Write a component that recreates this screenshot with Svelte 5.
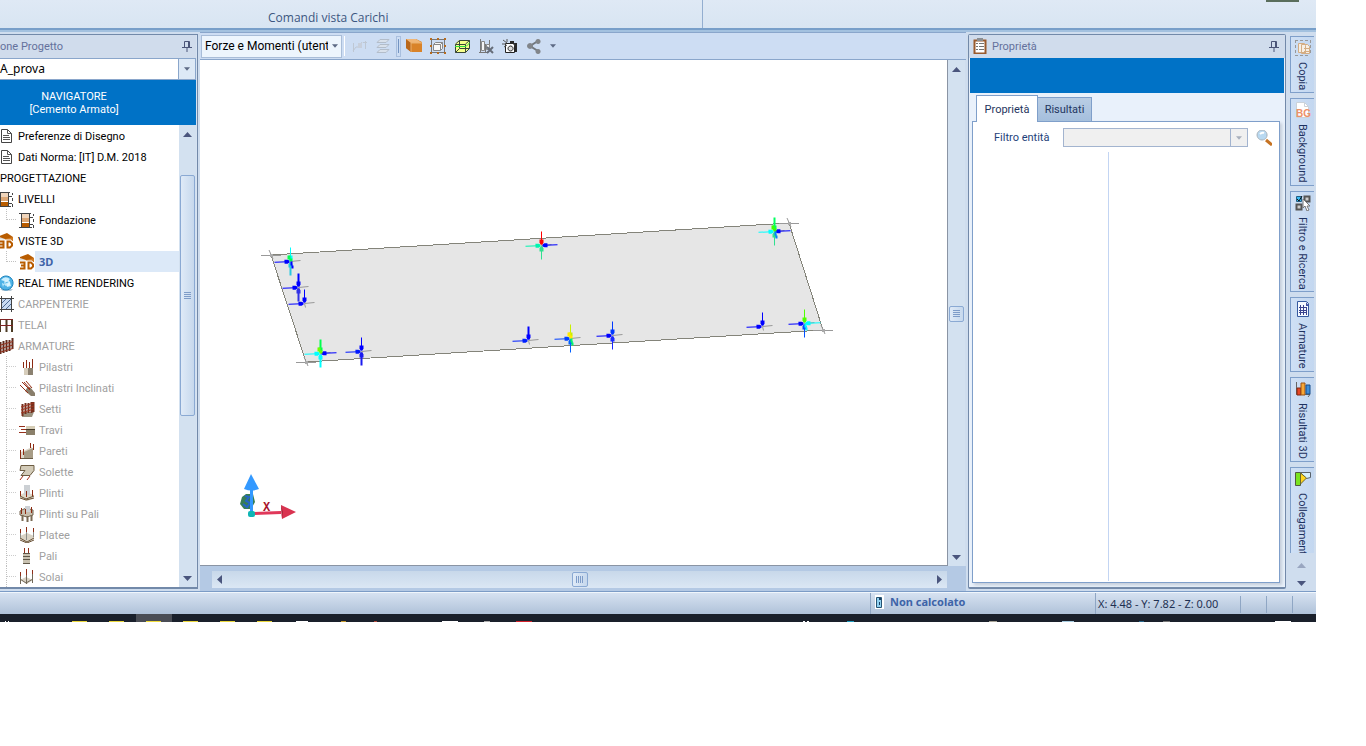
<script>
    // every icon is a list of [path, fill, stroke, stroke width] on a 16x16 grid
    const icons = {
        doc: [["M3.5 1.5h6l4 4v9h-10z", "#fff", "#444"], ["M9.5 1.5v4h4M5 7.5h6M5 9.5h7M5 11.5h7", "none", "#555"]],
        level: [
            ["M3 2h7v4H3z", "#f0d5bb"], ["M3 6h7v4H3z", "#dda877"], ["M3 11h7v4H3z", "#b85c00"],
            ["M0 1.5h12M2.500 1v14M10.500 1v14M0 15.500h13M10 5.500h4M10 12.500h4", "none", "#444"],
            ["M14.500 2v2M14.500 7v3M14.500 13v3", "none", "#444"]
        ],
        view3d: [
            ["M1 3l8-3 6 4v4H1z", "#b85c00"], ["M1 4l6 2v2H1z", "#dedad4"], ["M7 6l8-2v4H7z", "#d27a20"],
            ["M1 8.500h4.500v6H1M2 11.500h3M9.500 8.500h2.500l2 2v2l-2 2H9.500z", "none", "#fff", 4],
            ["M1 8.500h4.500v6H1M2 11.500h3M9.500 8.500h2.500l2 2v2l-2 2H9.500z", "none", "#b85c00", 2]
        ],
        globe: [
            ["M2 14h13l-2 2H5z", "#b5c9d6"], ["M8 1a7 7 0 1 0 .1 0z", "#4fb3e6", "#1c83bd"],
            ["M3 5q4-5 9-1l-3 3zM8 8l4-1 1 4-4 1zM4 8l2 1-1 3z", "#c9efff"], ["M7 6h4v4H7z", "none", "#e9fbff"]
        ],
        carp: [
            ["M3 3h10v10H3z", "#c9dbf2"], ["M3 8l5-5M3 13L13 3M8 13l5-5", "none", "#4d6a94"],
            ["M3.500 0v16M13.500 0v16M1 2.500h15M1 13.500h15", "none", "#444"]
        ],
        frame: [["M2 15V2M8.500 15V2M14 15V2", "none", "#4c3b24", 2], ["M1 2.500h14M1 8.500h14", "none", "#7e2222", 1]],
        bars: [
            ["M2.500 4v12M5.500 3v12M8.500 2v12M11.500 2v11M14.500 0v11", "none", "#5e2b1d", 2],
            ["M1 7.500l14-4M1 11l14-4M1 14.500l14-4", "none", "#92301c", 1]
        ],
        pilastri: [
            ["M5 9h9v7H5z", "#8b8170"], ["M5 9h4v7H5z", "#d6cdbb"],
            ["M4.500 3v6M7.500 1v8M10.500 3v6M13.500 0v9", "none", "#8c2a12", 1]
        ],
        inclinati: [["M8 8l3-1 5 6v3h-4L6 11z", "#897e6b"], ["M1 5l8 8M3 2l8 8M7 1l6 7M5 2l6 7", "none", "#982f16", 1]],
        setti: [
            ["M3 11h12l-2 5H3z", "#9b927f"], ["M3.500 3v12M6.500 2v11M9.500 2v10M12.500 1v11M14.500 1v10", "none", "#75301e", 2],
            ["M2 6l13-4M2 9l13-4M2 12l13-4", "none", "#9d321d"]
        ],
        travi: [
            ["M7 4h9v9H7z", "#8b806a"], ["M7 4h9v3H7z", "#d6cdb6"],
            ["M0 4.500h6M2 7.500h6M0 10.500h7", "none", "#96301b", 1], ["M7 7.500h9", "none", "#433929"]
        ],
        pareti: [
            ["M2 9l11-5v11H2z", "#ddd6c9"], ["M5 9l9-4v11H5z", "#a79c86"],
            ["M1.500 7v9M4.500 6v6M11.500 0v5M14.500 1v6", "none", "#8c2a12"], ["M2 15.500h12", "none", "#695c46"]
        ],
        solette: [
            ["M2 1.500h13v5l-4 5H2l4-5H1z", "#d3cbb8", "#6c5c42"], ["M4 12l-3 4M11 12l-3 4", "none", "#a53018", 1]
        ],
        plinti: [
            ["M1 10l6-3 8 3-1 4-6 2-7-3z", "#ded8c9"], ["M5 0h6v10H5z", "#ccd0d4"],
            ["M1 11l6 3 8-3M1 13l6 2 8-2", "none", "#6b5338"], ["M1.500 6v5M7.500 6v6M13.500 5v6", "none", "#8c2a12"]
        ],
        plintiPali: [
            ["M1 5l6-3 7 2v5l-6 2-7-2z", "#c8bfae", "#73634e"], ["M6 0h5v6H6z", "#ccd0d4"],
            ["M3.500 9v6M8.500 10v6M12.500 9v6", "none", "#7a6b54", 2], ["M2.500 2v6M6.500 3v5M12.500 1v6", "none", "#8c2a12"]
        ],
        platee: [
            ["M1 9l7-3 7 3v3l-7 4-7-4z", "#d9d3c5"], ["M1 11l7 4 7-4M1 13l7 3 7-3", "none", "#6b5338"],
            ["M1.500 2v4M7.500 0v5M14.500 1v4", "none", "#8c2a12"], ["M1.500 6v5M7.500 5v8M14.500 5v5", "none", "#8a8a86"]
        ],
        pali: [
            ["M4 5h7v11H4z", "#c8c1b0"], ["M5.500 0v6M9.500 0v6", "none", "#92301b", 1],
            ["M4 5.500h7M4 8.500h7M4 11.500h7M4 15.500h7", "none", "#5f5748"]
        ],
        solai: [
            ["M1 11l6-3 7 3-6 4z", "#d8d2c5"], ["M1 10l6 4 7-4M1.500 5v10M13.500 4v10M7.500 6v9", "none", "#716858"],
            ["M1.500 3v4M7.500 0v6M13.500 1v4", "none", "#92301b"]
        ],
        pin: [["M5.500 9V3.500h5V9M3 9.500h10M8 10v4M9.500 4v5", "none", "#4b5578"]],
        clip: [
            ["M2.500 2.500h11v13h-11z", "#fff", "#9a5b2c", 2], ["M5 0h6v3H5z", "#8b8f93"],
            ["M4 5.500h2M7 5.500h5M4 8.500h2M7 8.500h5M4 11.500h2M7 11.500h5", "none", "#747474"]
        ],
        lens: [["M10 10l6 5", "none", "#c67323", 3], ["M6 0a5 5 0 1 0 .1 0z", "#b9d9f1", "#a7b1ba"], ["M4 4q2-2 4-1", "none", "#fff", 2]],
        loadOff: [["M2.500 5v9M2 13l3-4h3l3-5M14.500 3v8M12 4.500h4", "none", "#b9bec6", 1], ["M7 5h4v5H7z", "#c6cad1"]],
        layersOff: [["M2 4.500l3-3h9l-3 3zM2 9.500l3-3h9l-3 3zM2 14.500l3-3h9l-3 3z", "#dfe3e8", "#a9b0b9"]],
        box: [["M0 1h10l6 3v10H5l-5-4z", "#d98329"], ["M0 1l5 4v9l-5-4z", "#b9671a"], ["M0 1h10l6 4H5z", "#f0b676"], ["M5 5v9M5 5h11", "none", "#eab16e"]],
        boxSel: [
            ["M1.500 1.500h13v13h-13z", "none", "#777"], ["M3.500 6.500l2-2h7v6l-2 2h-7z", "#f7f7f7", "#888"],
            ["M4 6.500h6.500v6M10.500 6.500l2-2", "none", "#888"],
            ["M0 0h2v2H0zM7 0h2v2H7zM14 0h2v2h-2zM0 7h2v2H0zM14 7h2v2h-2zM0 14h2v2H0zM7 14h2v2H7zM14 14h2v2h-2z", "#b66b1e"]
        ],
        boxWire: [
            ["M1 6l4-4h10v8l-3 5H1z", "#f7ff8b"], ["M1.500 6.500h10v8h-10zM5.500 10V2.500h10v8M1.500 6l4-3.500M11.500 6l4-3.500M11.500 14.500l4-4M1.500 14.500l4-4h10", "none", "#39463a"],
            ["M1 8.500h11l4-4", "none", "#30df36", 1]
        ],
        noLoad: [
            ["M2.500 1v13M7.500 6v8M11.500 2v7M1 14.500h8", "none", "#777"], ["M3.500 3.500h3v9h-3zM8.500 6.500h3v5h-3z", "#f5f5f5", "#888"],
            ["M9 9l6 6M15 9l-6 6", "none", "#666d79", 2]
        ],
        camera: [
            ["M3.500 5.500h8l1 2v7h-9z", "#fff", "#222"], ["M8 3h4v3H8zM12 5h3v9h-2z", "#292929"],
            ["M8.500 8a2.500 2.500 0 1 0 .1 0z", "#ddd", "#222"], ["M1 2l4 3M5 1v3M0 6h4M2 9l3-2", "none", "#555"]
        ],
        share: [["M12 3L4 8l8 5", "none", "#71777e", 2], ["M12 1a2.500 2.500 0 1 0 .1 0zM4 5a3 3 0 1 0 .1 0zM12 11a2.500 2.500 0 1 0 .1 0z", "#81858a"]],
        copy: [
            ["M0 .5h3M5 .5h3M10 .5h3M0 15.500h3M5 15.500h3M10 15.500h3M.5 0v3M.5 5v3M.5 10v3M15.500 0v3M15.500 5v3M15.500 10v3", "none", "#999"],
            ["M3.500 3.500h6l1 2v7h-7zM6.500 4.500h6l2 2v7h-8z", "#f7efe4", "#d4ad83"], ["M9 8.500h5M9 11.500h5M10.500 7v6", "none", "#d4ad83"]
        ],
        bg: [["M1.500.5h8l4 4v11h-12z", "#fff", "#cbd2d9"], ["M9.500.5v4h4", "none", "#cbd2d9"]],
        filter: [
            ["M1.500 1.500h5v5h-5z", "#39baf2", "#245e83"], ["M9.500 1.500h5v5h-5zM1.500 9.500h5v5h-5z", "#ccc", "#555", 2],
            ["M2 4l2 2 3-5", "none", "#111"], ["M8 4v9l2-2 2 5 2-1-2-4h3z", "#fff", "#777"]
        ],
        armature: [["M2.500.5h9l2 2v13h-11z", "#f5f9ff", "#365aa0"], ["M11 1v4h3", "#3d4fa0"], ["M4 6.500h8M4 11.500h8M5.500 4v10M8.500 4v10M11.500 6v8M4 9.500h8", "none", "#3b438e"]],
        chart: [["M1.500 1v12.500H15L13 16", "none", "#666"], ["M2 7h4v7H2z", "#e74725", "#812710"], ["M6 2h4v12H6z", "#f7a837", "#9b5214"], ["M11 4h4v9h-4z", "#3e8fdb", "#174c89"]],
        link: [["M.5 1.500h5v13H.5z", "#79e321", "#505b40"], ["M5.500 1.500h10v5l-4 1z", "#d6f0fc", "#59626a"], ["M5.500 2v11l6-6z", "#ffd51f", "#6d682a"]],
        phone: [["M4 1h9v14H4z", "#fff"], ["M5.500 3.500h5v10h-5z", "#8fd0f0", "#275474"], ["M8 4h2v2H8zM8 8h1v3H8z", "#173d60"]]
    };

    const tree = [
        { text: "Preferenze di Disegno", icon: "doc", depth: 0 },
        { text: "Dati Norma: [IT] D.M. 2018", icon: "doc", depth: 0 },
        { text: "PROGETTAZIONE", depth: -1 },
        { text: "LIVELLI", icon: "level", depth: 0 },
        { text: "Fondazione", icon: "level", depth: 1, last: true },
        { text: "VISTE 3D", icon: "view3d", depth: 0 },
        { text: "3D", icon: "view3d", depth: 1, last: true },
        { text: "REAL TIME RENDERING", icon: "globe", depth: 0 },
        { text: "CARPENTERIE", icon: "carp", depth: 0, off: true },
        { text: "TELAI", icon: "frame", depth: 0, off: true },
        { text: "ARMATURE", icon: "bars", depth: 0, off: true },
        { text: "Pilastri", icon: "pilastri", depth: 1, off: true },
        { text: "Pilastri Inclinati", icon: "inclinati", depth: 1, off: true },
        { text: "Setti", icon: "setti", depth: 1, off: true },
        { text: "Travi", icon: "travi", depth: 1, off: true },
        { text: "Pareti", icon: "pareti", depth: 1, off: true },
        { text: "Solette", icon: "solette", depth: 1, off: true },
        { text: "Plinti", icon: "plinti", depth: 1, off: true },
        { text: "Plinti su Pali", icon: "plintiPali", depth: 1, off: true },
        { text: "Platee", icon: "platee", depth: 1, off: true },
        { text: "Pali", icon: "pali", depth: 1, off: true },
        { text: "Solai", icon: "solai", depth: 1, off: true }
    ];

    const tools = [
        { icon: "box", name: "Solido" },
        { icon: "boxSel", name: "Selezione" },
        { icon: "boxWire", name: "Wireframe" },
        { icon: "noLoad", name: "Nascondi carichi" },
        { icon: "camera", name: "Istantanea" },
        { icon: "share", name: "Condividi" }
    ];

    const sideTabs = [
        { icon: "copy", text: "Copia" },
        { icon: "bg", text: "Background" },
        { icon: "filter", text: "Filtro e Ricerca" },
        { icon: "armature", text: "Armature" },
        { icon: "chart", text: "Risultati 3D" },
        { icon: "link", text: "Collegamenti" }
    ];

    // loads on each node: [direction, colour, width]
    const nodes = [
        { x: 290, y: 261, loads: [["d", "#00ffff", 1], ["u", "#28c8e0", 2], ["r", "#0000ff", 1]], head: "#00ff50", moment: "#0000ff" },
        { x: 298, y: 287, loads: [["d", "#0000ff", 2], ["u", "#3333e6", 2], ["r", "#0000ff", 1]] },
        { x: 304, y: 303, loads: [["d", "#0000ff", 1], ["r", "#0000ff", 1]] },
        { x: 320, y: 353, loads: [["d", "#00ff50", 2], ["u", "#00ffff", 2], ["r", "#00ffff", 1], ["l", "#0000ff", 1]], head: "#70ff00" },
        { x: 361, y: 351, loads: [["d", "#0000ff", 1], ["u", "#1a1af0", 2], ["r", "#0018ff", 1]] },
        { x: 528, y: 340, loads: [["d", "#0000ff", 2], ["r", "#0020ff", 1]] },
        { x: 541, y: 245, loads: [["u", "#30e090", 1], ["r", "#00f5b0", 1], ["l", "#0000ff", 1], ["d", "#ff0000", 1]] },
        { x: 570, y: 338, loads: [["d", "#c8f000", 1], ["u", "#0060ff", 1], ["r", "#0040ff", 1]], head: "#ffea00", moment: "#00ff60" },
        { x: 612, y: 335, loads: [["d", "#0038ff", 1], ["u", "#1a28ff", 1], ["r", "#0000ff", 1]] },
        { x: 762, y: 326, loads: [["d", "#0000ff", 1], ["r", "#0000ff", 1]] },
        { x: 774, y: 231, loads: [["d", "#00ff60", 2], ["u", "#30e090", 1], ["r", "#00ffff", 1], ["l", "#0000ff", 1]], head: "#40ff00", moment: "#0080ff" },
        { x: 804, y: 323, loads: [["d", "#50ff00", 1], ["u", "#0050ff", 1], ["r", "#0000ff", 1], ["l", "#00ffff", 1]], moment: "#00ffff" }
    ];
    const angles = { d: 0, l: 87, u: 180, r: 267 };

    const corners = [[271, 255], [789, 223], [823, 330], [306, 362]];

    // buttons of the system bar, only their top edge shows
    const taskbar = [
        [5, 1, "#fff"], [8, 1, "#fff"], [72, 15, "#e8d53b"], [109, 15, "#e8d53b"], [146, 15, "#f0dc3c"], [183, 15, "#e8d53b"],
        [220, 15, "#e8d53b"], [257, 15, "#e8d53b"], [296, 12, "#fff"], [341, 5, "#c69a2c"], [374, 3, "#b0493d"],
        [442, 16, "#fff"], [484, 6, "#aaa"], [516, 16, "#d3212b"], [803, 2, "#fff"], [807, 2, "#fff"], [847, 7, "#1f9bbd"],
        [989, 8, "#a6a295"], [1062, 12, "#a5c9dd"], [1139, 5, "#28668b"], [1163, 7, "#777"], [1275, 16, "#fff"]
    ];

    let current = $state("3D");
    let page = $state("Proprietà");
</script>

<svelte:head>
    <title>Navigatore</title>
</svelte:head>

{#snippet icon(name)}
    <svg class="icon" viewBox="0 0 16 16" aria-hidden="true">
        {#each icons[name] as [d, fill, stroke, width]}
            <path {d} {fill} stroke={stroke ?? "none"} stroke-width={width ?? 1} />
        {/each}
        {#if name === "bg"}
            <text x="1" y="15" class="bg-text">BG</text>
        {/if}
    </svg>
{/snippet}

{#snippet arrow(dir)}
    <svg class="arrow {dir}" viewBox="0 0 9 5" aria-hidden="true"><path d="M0 5L4.500 0L9 5z" /></svg>
{/snippet}

<div class="app">
    <div class="ribbon">
        <div class="group">Comandi vista Carichi</div>
        <div class="rest"><span class="chip"></span></div>
    </div>

    <div class="main">
        <aside class="navigator">
            <header class="title"><span>one Progetto</span><button aria-label="Blocca pannello">{@render icon("pin")}</button></header>
            <div class="combo project">
                <select aria-label="Progetto"><option>A_prova</option></select>
                <span class="drop">{@render arrow("down small")}</span>
            </div>
            <div class="banner">NAVIGATORE<br />[Cemento Armato]</div>
            <div class="tree">
                <ul>
                    {#each tree as item}
                        <li class="depth{item.depth}" class:last={item.last} class:off={item.off} class:current={item.text === current}>
                            {#if item.depth === 1}<i class="branch"></i>{/if}
                            {#if item.icon}{@render icon(item.icon)}{/if}
                            <button disabled={item.off} onclick={() => (current = item.text)}>{item.text}</button>
                        </li>
                    {/each}
                </ul>
                <div class="scroll vertical">
                    {@render arrow("up")}
                    <div class="track"><div class="thumb"><i></i></div></div>
                    {@render arrow("down")}
                </div>
            </div>
        </aside>

        <section class="view">
            <div class="toolbar">
                <div class="combo loads">
                    <select aria-label="Vista"><option>Forze e Momenti (utente)</option></select>
                    <span class="drop">{@render arrow("down small")}</span>
                </div>
                <i class="divider"></i>
                <button class="faded" aria-label="Carichi" disabled>{@render icon("loadOff")}</button>
                <button class="faded" aria-label="Livelli" disabled>{@render icon("layersOff")}</button>
                <i class="grip"></i>
                {#each tools as tool}
                    <button aria-label={tool.name}>{@render icon(tool.icon)}</button>
                {/each}
                <button class="more" aria-label="Altro">{@render arrow("down small")}</button>
            </div>
            <div class="stage">
                <div class="canvas">
                    <svg viewBox="200 60 747 505" preserveAspectRatio="xMinYMin meet">
                        <polygon points={corners.join(" ")} fill="#e6e6e6" stroke="#84847a" shape-rendering="crispEdges" />
                        {#each corners as [x, y]}
                            <path d="M{x - 10} {y + 0.5}h20M{x - 2} {y - 5}l4 9" stroke="#999" fill="none" />
                            <rect x={x - 1} y={y - 1} width="3" height="3" fill="#aaa" />
                        {/each}
                        {#each nodes as node}
                            <g transform="translate({node.x + 0.5} {node.y + 0.5})">
                                <path d="M0 0l10-1M0 0l1 4" stroke="#999" fill="none" />
                                {#each node.loads as [dir, color, width]}
                                    <g transform="rotate({angles[dir]})" fill={color}>
                                        <rect x={-width / 2} y={dir === "r" || dir === "l" ? -16 : -14} {width} height="13" />
                                        <path d="M-2-6h4v3l-1 2h-2l-1-2z" />
                                    </g>
                                {/each}
                                {#if node.head}<path d="M-3-6h3v3h2v3h-3v-2h-2z" fill={node.head} />{/if}
                                {#if node.moment}<path d="M0 0h2v4h1v3H1V4H0z" fill={node.moment} />{/if}
                            </g>
                        {/each}
                        <g>
                            <path d="M242 497l4-3h7l2 8-4 7h-7l-4-5z" fill="#377d55" />
                            <path d="M245 496l4 1-3 4 4 2-3 4-4-3" stroke="#2465c8" stroke-width="2" fill="none" />
                            <rect x="250" y="488" width="3" height="25" fill="#3399ff" />
                            <path d="M251 474l8 15q-7 3-15 0z" fill="#3399ff" />
                            <path d="M253 512l28-1v3l-28 1z" fill="#e0385a" />
                            <path d="M281 505l15 7-14 7z" fill="#d93350" />
                            <path d="M281 505l2 7-1 7z" fill="#a8243a" />
                            <rect x="248" y="511" width="7" height="6" rx="2" fill="#0fb5b5" />
                            <text x="263" y="511" class="axis">X</text>
                        </g>
                    </svg>
                </div>
                <div class="scroll vertical">
                    {@render arrow("up")}
                    <div class="track center"><div class="thumb"><i></i></div></div>
                    {@render arrow("down")}
                </div>
            </div>
            <div class="bottom">
                <div class="scroll horizontal">
                    {@render arrow("left")}
                    <div class="track center"><div class="thumb"><i></i></div></div>
                    {@render arrow("right")}
                </div>
            </div>
        </section>

        <aside class="properties">
            <header class="title">{@render icon("clip")}<span>Proprietà</span><button aria-label="Blocca pannello">{@render icon("pin")}</button></header>
            <div class="strip"></div>
            <div class="tabs">
                {#each ["Proprietà", "Risultati"] as name}
                    <button class:active={page === name} onclick={() => (page = name)}>{name}</button>
                {/each}
            </div>
            <div class="sheet">
                <div class="filter">
                    <label for="entity">Filtro entità</label>
                    <div class="combo entity">
                        <select id="entity" disabled><option></option></select>
                        <span class="drop">{@render arrow("down small")}</span>
                    </div>
                    <button aria-label="Cerca">{@render icon("lens")}</button>
                </div>
                <div class="columns"><div></div><div></div></div>
            </div>
        </aside>

        <nav class="side">
            <div class="side-list">
                {#each sideTabs as tab}
                    <button>{@render icon(tab.icon)}<span>{tab.text}</span></button>
                {/each}
            </div>
            <div class="side-arrows">{@render arrow("up")}{@render arrow("down")}</div>
        </nav>
    </div>

    <footer class="status">
        <div class="state">{@render icon("phone")}<b>Non calcolato</b></div>
        <div class="coords">X: 4.48 - Y: 7.82 - Z: 0.00</div>
        <i></i><i></i><i></i>
    </footer>

    <svg class="taskbar" aria-hidden="true">
        <rect x="136" width="36" height="8" fill="#4a4d55" />
        {#each taskbar as [x, width, color]}
            <rect {x} y="7" {width} height="1" fill={color} />
        {/each}
    </svg>
</div>

<style>
    :global(body) {
        margin: 0;
        background: #fff;
    }

    .app {
        width: calc(100% - 50px);
        color: #000;
        background: #cfddee;
        font: 11px/13px Roboto, Tahoma, sans-serif;
    }

    button, select {
        font: inherit;
        color: inherit;
        border: 0;
        margin: 0;
        padding: 0;
        background: none;
        border-radius: 0;
    }

    .icon {
        width: 16px;
        height: 16px;
        flex: none;
        display: block;
    }

    .bg-text {
        font: bold 10px "Liberation Sans", sans-serif;
        fill: #ec9068;
    }

    .arrow {
        width: 9px;
        height: 5px;
        fill: #4a557d;
        flex: none;
        display: block;
    }

    .arrow.down { transform: rotate(180deg); }
    .arrow.left { transform: rotate(-90deg); }
    .arrow.right { transform: rotate(90deg); }

    .arrow.small {
        width: 6px;
        height: 4px;
        fill: #5d6a85;
    }

    /* ribbon */
    .ribbon {
        display: flex;
        height: 28px;
        border-bottom: 2px solid #789fc9;
        box-shadow: 0 2px #a3c1df;
        margin-bottom: 2px;
        background: linear-gradient(#dfe9f5, #d8e5f2);
        font: 12px/16px "Open Sans", sans-serif;
        color: #3c5680;
    }

    .group {
        width: 703px;
        box-sizing: border-box;
        padding: 10px 0 0 268px;
        border-right: 1px solid #93aed0;
    }

    .rest {
        flex: 1;
        display: flex;
        justify-content: flex-end;
    }

    .chip {
        width: 33px;
        height: 2px;
        margin-right: 17px;
        background: #5a6e5c;
    }

    .main {
        display: flex;
        gap: 2px;
        background: #cfddee;
        border-bottom: 1px solid #7c9cc6;
    }

    .title {
        display: flex;
        align-items: center;
        height: 22px;
        padding-bottom: 1px;
        color: #64719c;
        background: #d0dcec;
    }

    .title span { flex: 1; }
    .title button { margin-right: 1px; }

    /* combo boxes */
    .combo {
        display: flex;
        position: relative;
        box-sizing: border-box;
        border: 1px solid #8aa6cb;
        background: #fff;
    }

    .combo select {
        appearance: none;
        flex: 1;
        min-width: 0;
        overflow: hidden;
    }

    .drop {
        display: flex;
        align-items: center;
        justify-content: center;
        width: 16px;
        pointer-events: none;
    }

    .project {
        height: 22px;
        border-left: 0;
        font: 12px/16px "Noto Sans", sans-serif;
    }

    .project .drop {
        border-left: 1px solid #8aa6cb;
        background: #dde9f6;
    }

    /* navigator */
    .navigator {
        width: 198px;
        box-sizing: border-box;
        padding-right: 1px;
        border: solid #7289a9;
        border-width: 1px 1px 2px 0;
        margin: 2px 0;
        flex: none;
        background: #d6e3f2;
    }

    .banner {
        padding: 10px 48px 9px 0;
        text-align: center;
        color: #fff;
        background: #0072c6;
    }

    .tree {
        display: flex;
        background: #fff;
    }

    .tree .vertical { width: 17px; }

    ul {
        flex: 1;
        margin: 0;
        padding: 0;
        list-style: none;
    }

    li {
        display: flex;
        align-items: center;
        height: 21px;
        white-space: nowrap;
    }

    li .icon { margin-left: -2px; }
    li button { padding: 2px 0 0 4px; }
    .depth-1 button { padding-left: 0; }
    .depth1 .icon { margin: 0 0 0 3px; }
    .off { color: #a0a0a0; }

    .branch {
        align-self: stretch;
        width: 9px;
        margin-left: 6px;
        border-left: 1px dotted #c0c0c0;
        background: linear-gradient(90deg, #ccc 50%, transparent 50%) 0 10px / 2px 1px repeat-x;
    }

    .last .branch {
        height: 10px;
        align-self: flex-start;
        border-bottom: 1px dotted #c0c0c0;
        background: none;
    }

    .current button {
        flex: 1;
        align-self: stretch;
        padding-top: 0;
        text-align: left;
        font: bold 11px/13px "Noto Sans", sans-serif;
        color: #3e64a8;
        background: #dce9f8;
    }

    /* scroll bars */
    .scroll {
        display: flex;
        align-items: center;
        background: #d3e1f0;
    }

    .vertical {
        width: 16px;
        flex-direction: column;
        padding: 7px 0 6px;
    }

    .track {
        flex: 1;
        display: flex;
        flex-direction: column;
    }

    .center { justify-content: center; }

    .thumb {
        width: 15px;
        box-sizing: border-box;
        display: grid;
        place-items: center;
        border: 1px solid #8aa9d3;
        border-radius: 2px;
        background: linear-gradient(90deg, #dfeaf7, #c6d8ed);
    }

    .thumb i {
        width: 7px;
        height: 8px;
        background: repeating-linear-gradient(#7e9cc8 0 1px, transparent 1px 2px);
    }

    .tree .thumb {
        height: 241px;
        margin-top: 38px;
    }

    .stage .thumb { height: 16px; }

    .horizontal {
        height: 17px;
        padding: 0 3px;
        background: linear-gradient(#c8d8ea, #dbe7f4);
    }

    .horizontal .track { align-items: center; }

    .horizontal .thumb {
        width: 16px;
        height: 15px;
    }

    .horizontal .thumb i {
        width: 8px;
        height: 7px;
        background: repeating-linear-gradient(90deg, #7e9cc8 0 1px, transparent 1px 2px);
    }

    /* 3D view */
    .view {
        flex: 1;
        min-width: 0;
        display: flex;
        flex-direction: column;
    }

    .toolbar {
        display: flex;
        align-items: center;
        height: 26px;
        gap: 8px;
        border: solid #8aa6cb;
        border-width: 1px 0;
        background: #cdddf3;
    }

    .loads {
        width: 141px;
        height: 23px;
        margin-left: 1px;
        border-color: #a9bdd8;
        background: #edf5fd;
        font-size: 12px;
    }

    .loads select { padding-left: 3px; }
    .loads .drop { width: 13px; }

    .divider {
        width: 1px;
        height: 20px;
        background: #fff;
        margin: 0 -2px 0 -6px;
    }

    .faded { opacity: 0.7; }

    .grip {
        width: 5px;
        height: 21px;
        margin: 0 -3px;
        box-sizing: border-box;
        border: 1px solid #a9bfde;
        background: linear-gradient(#7394c2, #7394c2) center / 1px 14px no-repeat;
    }

    .stage {
        flex: 1;
        display: flex;
        padding-right: 1px;
    }

    .canvas {
        flex: 1;
        min-width: 0;
        border: solid #8a94a4;
        border-width: 0 1px 1px 0;
        background: #fff;
    }

    .canvas svg {
        display: block;
        width: 100%;
    }

    .axis {
        font: bold 12px "Liberation Mono", monospace;
        fill: #a8142a;
    }

    .stage .vertical { width: 17px; }

    .bottom {
        padding: 5px 19px 3px 12px;
        background: #b4c9e4;
    }

    /* properties */
    .properties {
        display: flex;
        flex-direction: column;
        width: 318px;
        box-sizing: border-box;
        margin: 2px 0;
        flex: none;
        border: 1px solid #7289a9;
        border-bottom-width: 2px;
        border-radius: 2px;
        background: #e9f1fb;
    }

    .properties .title {
        gap: 4px;
        padding: 0 2px 1px 3px;
    }

    .strip {
        height: 35px;
        margin: 0 1px;
        background: #0072c6;
    }

    .tabs {
        display: flex;
        align-items: flex-end;
        padding: 2px 7px 0;
        color: #1f3560;
    }

    .tabs button {
        width: 54px;
        height: 24px;
        border: 1px solid #7f9fca;
        border-width: 1px 1px 0 0;
        background: linear-gradient(#b9cde4, #a5bfdd);
    }

    .tabs .active {
        width: 62px;
        height: 27px;
        border-left-width: 1px;
        margin-bottom: -1px;
        position: relative;
        background: #fff;
    }

    .sheet {
        flex: 1;
        display: flex;
        flex-direction: column;
        margin: 0 5px 4px 3px;
        border: 1px solid #7f9fca;
        box-shadow: 2px 2px 3px #c3ccd8;
        background: #fff;
    }

    .filter {
        display: flex;
        align-items: center;
        padding: 6px 7px 5px 21px;
        color: #1e3f7a;
    }

    .filter label { width: 69px; }

    .entity {
        flex: 1;
        height: 19px;
        margin-right: 8px;
        border-color: #a3b4cf;
        background: #f0f0f0;
    }

    .entity .drop { border-left: 1px solid #a3b4cf; }
    .entity .drop :global(.arrow) { fill: #a9b0bd; }

    .columns {
        flex: 1;
        display: flex;
        margin-bottom: 1px;
    }

    .columns div:first-child {
        width: 135px;
        border-right: 1px solid #c3d5f3;
    }

    /* side tabs */
    .side {
        width: 26px;
        margin: 4px 0 0 2px;
        flex: none;
        display: flex;
        flex-direction: column;
        color: #1e3260;
    }

    .side-list {
        flex: 1 1 0;
        min-height: 0;
        overflow: hidden;
        display: flex;
        flex-direction: column;
        gap: 5px;
    }

    .side-list button {
        flex: none;
        width: 24px;
        box-sizing: border-box;
        display: flex;
        flex-direction: column;
        align-items: center;
        gap: 6px;
        padding: 3px 0 2px;
        border: 1px solid #7f9fca;
        border-right: 0;
        background: linear-gradient(90deg, #cfe0f5, #c3d7f0);
    }

    .side-list span { writing-mode: vertical-rl; }

    .side-arrows {
        display: flex;
        flex-direction: column;
        align-items: center;
        gap: 13px;
        padding: 10px 4px 5px 0;
    }

    .side-arrows :global(.up) { opacity: 0.4; }

    /* status bar */
    .status {
        display: flex;
        height: 21px;
        border-top: 1px solid #f0f6fc;
        background: linear-gradient(#d6e2f1, #b0c2d9);
        justify-content: flex-end;
        font-family: "Noto Sans", Tahoma, sans-serif;
        line-height: 21px;
        color: #1f3152;
    }

    .state {
        width: 224px;
        display: flex;
        gap: 3px;
        border-left: 1px solid #8fa6c4;
        line-height: 18px;
        color: #3e64a8;
    }

    .state .icon { margin-top: 1px; }

    .coords {
        width: 142px;
        padding-left: 2px;
        border-left: 1px solid #8fa6c4;
    }

    .status i {
        width: 25px;
        height: 17px;
        margin-top: 3px;
        border-left: 1px solid #8fa6c4;
    }

    .status i:last-child { width: 23px; }

    .taskbar {
        display: block;
        width: 100%;
        height: 8px;
        background: #1a202b;
    }
</style>
